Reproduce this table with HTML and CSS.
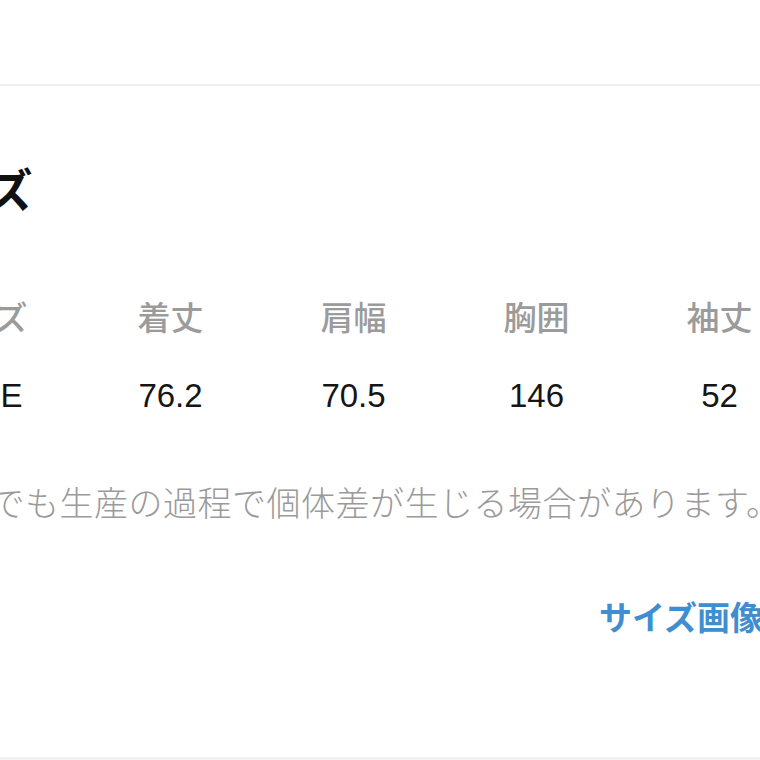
FILE: index.html
```html
<!DOCTYPE html>
<html lang="ja">
<head>
<meta charset="utf-8">
<link rel="stylesheet" href="styles.css">
</head>
<body>
<div class="page">
  <div class="topbar"></div>
  <main class="content">
    <h2 class="title">サイズ</h2>
    <div class="size-table">
      <div class="th first">サイズ</div>
      <div class="th">着丈</div>
      <div class="th">肩幅</div>
      <div class="th">胸囲</div>
      <div class="th">袖丈</div>
      <div class="td first">FREE</div>
      <div class="td">76.2</div>
      <div class="td">70.5</div>
      <div class="td">146</div>
      <div class="td">52</div>
    </div>
    <p class="note">※商品でも生産の過程で個体差が生じる場合があります。</p>
    <div class="link-row"><a class="link" href="#">サイズ画像を見る</a></div>
  </main>
  <div class="footer"></div>
</div>
</body>
</html>
```

FILE: styles.css
```css
html, body {
  margin: 0;
  padding: 0;
  background: #fff;
  overflow: hidden;
}
.page {
  width: 760px;
  height: 760px;
  display: flex;
  flex-direction: column;
  overflow: hidden;
  font-family: "Noto Sans CJK JP", "Noto Sans", sans-serif;
}
.topbar {
  height: 84px;
  flex: none;
  border-bottom: 2px solid #efefef;
}
.content {
  flex: 1;
  margin-left: -104px;
  width: 915px;
}
.title {
  margin: 78px 0 0;
  font-size: 46px;
  line-height: 1;
  font-weight: 700;
  color: #111;
}
.size-table {
  margin-top: 90px;
  display: grid;
  grid-template-columns: repeat(5, 183px);
  grid-template-rows: 33px 33px;
  row-gap: 46px;
}
.th {
  text-align: center;
  font-size: 33px;
  line-height: 1;
  font-weight: 500;
  color: #9b9b9b;
}
.td {
  text-align: center;
  font-family: "Liberation Sans", "Noto Sans CJK JP", sans-serif;
  font-size: 33px;
  line-height: 1;
  color: #151515;
}
.first {
  padding-right: 18px;
}
.note {
  margin: 73px 0 0 -9px;
  font-size: 34px;
  line-height: 1;
  letter-spacing: 0.5px;
  font-weight: 300;
  color: #9a9a9a;
  white-space: nowrap;
}
.link-row {
  margin-top: 81px;
  padding-left: 703px;
}
.link {
  font-size: 33px;
  line-height: 1;
  font-weight: 700;
  color: #3f8ed0;
  text-decoration: none;
  white-space: nowrap;
}
.footer {
  height: 3px;
  flex: none;
  background: #f2f2f2;
}
```
